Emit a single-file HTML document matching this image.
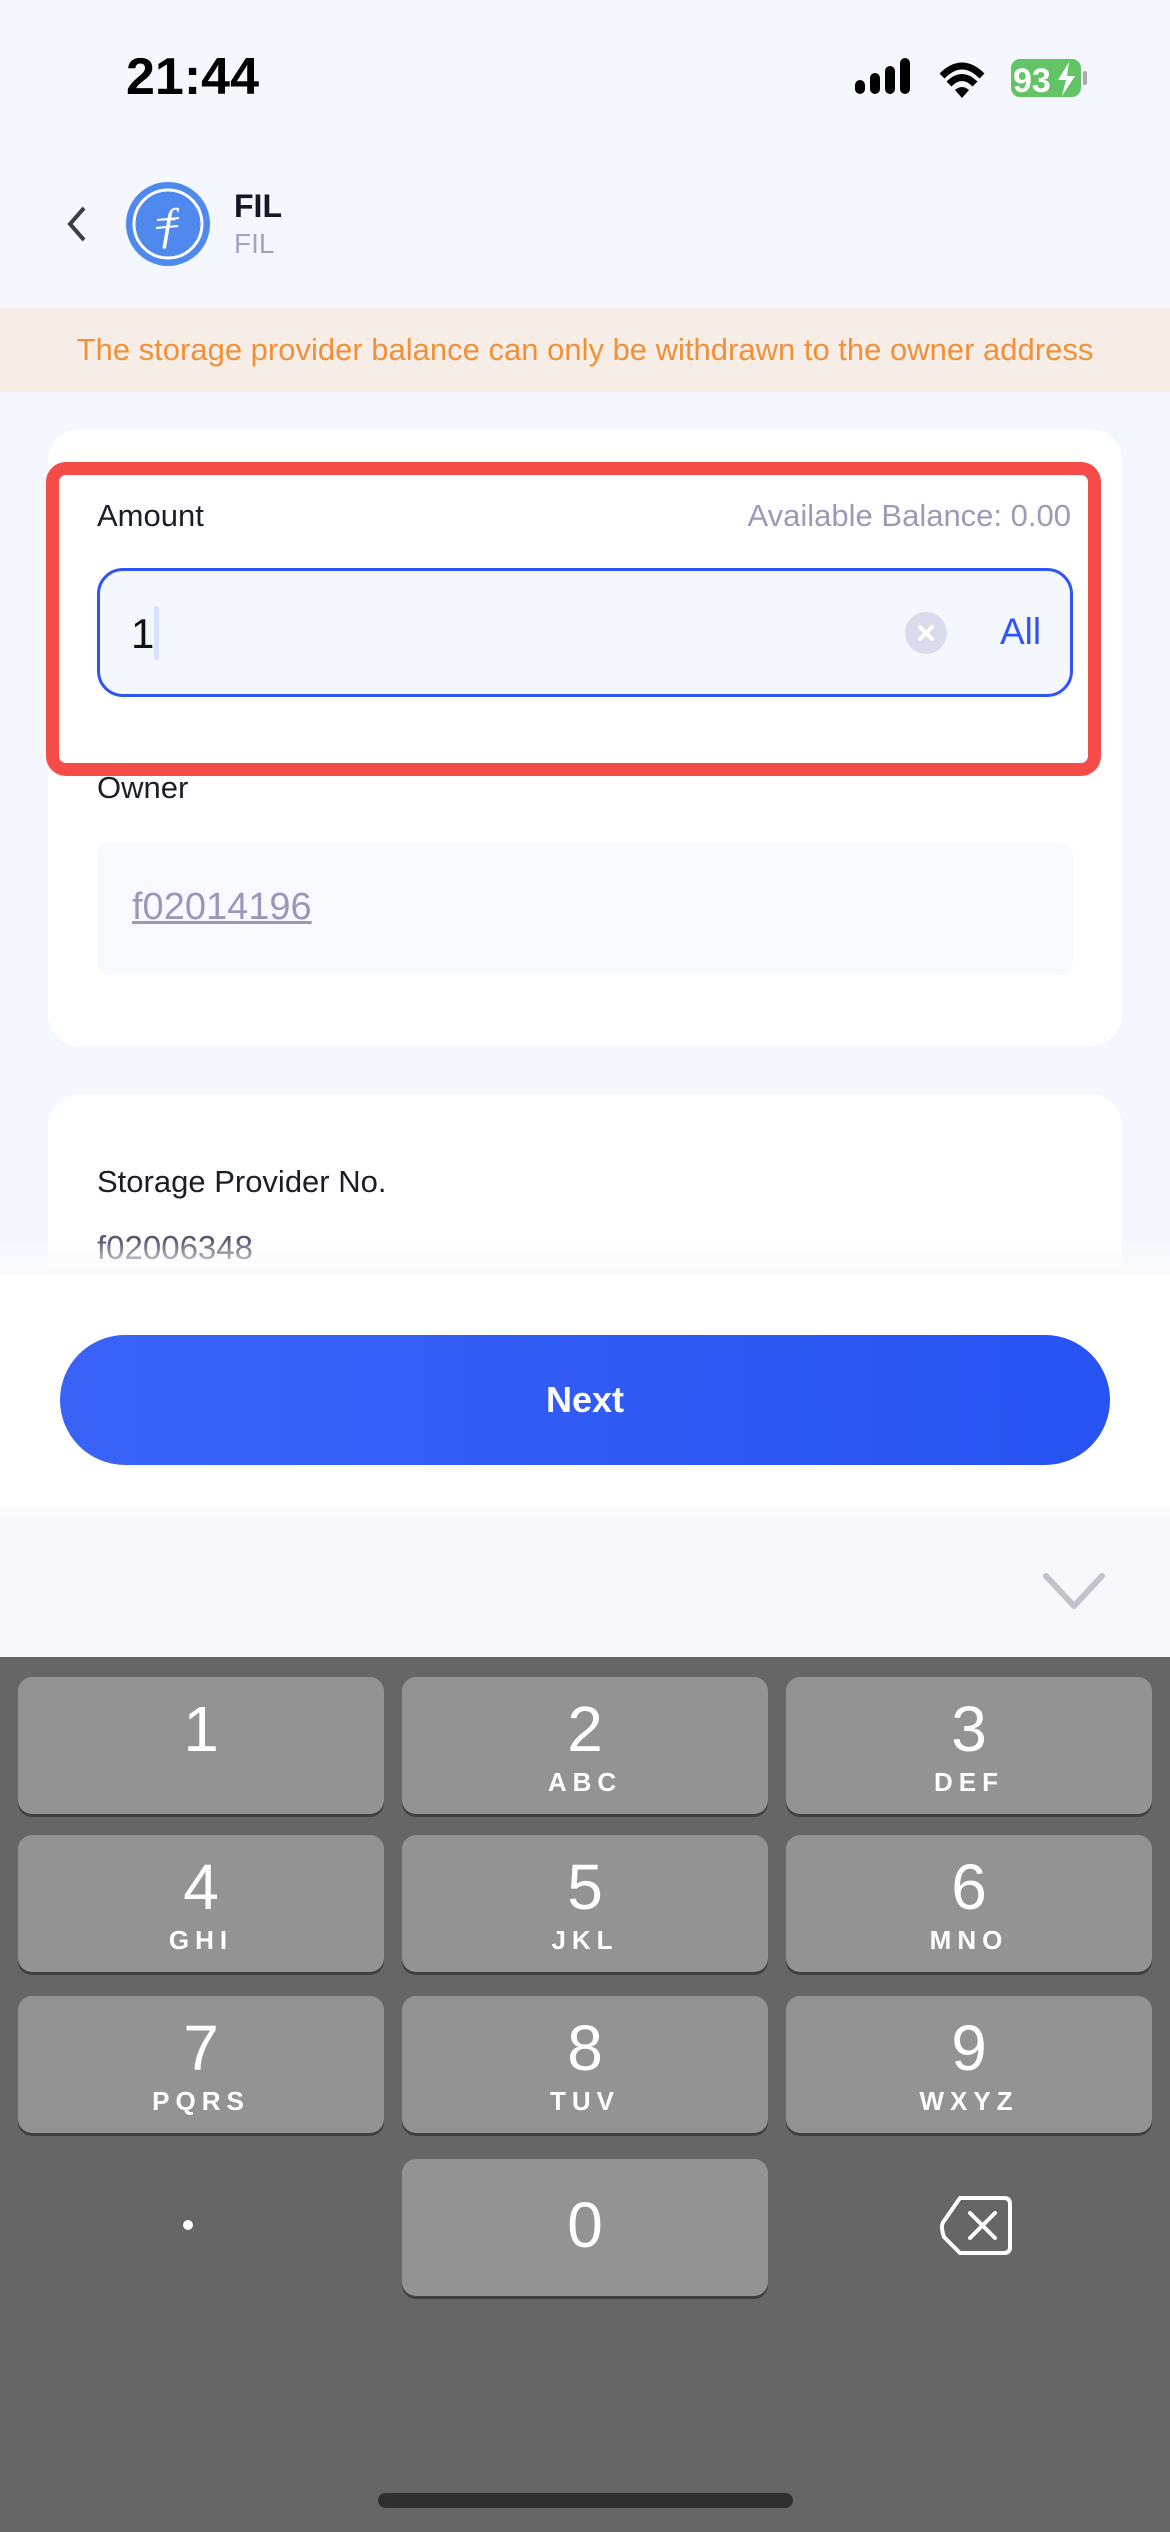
<!DOCTYPE html>
<html><head><meta charset="utf-8"><style>
*{margin:0;padding:0;box-sizing:border-box}
body{width:1170px;height:2532px;background:#f4f7fe;font-family:"Liberation Sans",sans-serif;position:relative;overflow:hidden}
.a{position:absolute}
.key{position:absolute;width:366px;height:137px;background:#939393;border-radius:14px;box-shadow:0 3px 0 #3f3f3f;color:#fff;text-align:center}
.key .d{font-size:64px;line-height:64px;margin-top:20px}
.key .l{font-size:26px;font-weight:bold;letter-spacing:6px;margin-top:6px}
</style></head><body>
<div class="a" style="left:126px;top:47px;font-size:52px;font-weight:bold;color:#000">21:44</div>
<svg class="a" style="left:855px;top:56px" width="240" height="44">
<rect x="0" y="24" width="10" height="14" rx="5"/><rect x="15" y="17" width="10" height="21" rx="5"/><rect x="30" y="10" width="10" height="28" rx="5"/><rect x="45" y="2" width="10" height="36" rx="5"/>
<g transform="translate(27,0)"><path d="M60 20 Q80 0 100 20" stroke="#000" stroke-width="7" fill="none"/><path d="M67 28 Q80 15 93 28" stroke="#000" stroke-width="7" fill="none"/><path d="M73 34 L80 42 L87 34 Q80 28 73 34Z"/></g>
<rect x="156" y="3" width="70" height="38" rx="9" fill="#63c466"/><rect x="228" y="15" width="4" height="14" rx="2" fill="#aaa"/>
<text x="158" y="36" font-family="Liberation Sans" font-weight="bold" font-size="34" fill="#fff">93</text><path d="M214 6 L203 24 L211 24 L207 40 L220 20 L212 20Z" fill="#fff"/>
</svg>
<svg class="a" style="left:62px;top:204px" width="30" height="40"><path d="M22 4 L8 20 L22 36" stroke="#3b3e4a" stroke-width="4" fill="none"/></svg>
<svg class="a" style="left:126px;top:182px" width="84" height="84"><circle cx="42" cy="42" r="42" fill="#5089ee"/><circle cx="42" cy="42" r="34" fill="none" stroke="#fff" stroke-width="3"/><text x="42" y="57" text-anchor="middle" font-family="Liberation Serif" font-style="italic" font-size="44" fill="#fff">f</text><path d="M31 38 L53 36 M30 46 L52 44" stroke="#fff" stroke-width="2"/></svg>
<div class="a" style="left:234px;top:188px;font-size:32px;font-weight:bold;color:#151728">FIL</div>
<div class="a" style="left:234px;top:228px;font-size:28px;color:#a5a4c0">FIL</div>
<div class="a" style="left:0;top:308px;width:1170px;height:84px;background:#f6ede6;color:#f0913a;font-size:31px;text-align:center;line-height:84px">The storage provider balance can only be withdrawn to the owner address</div>
<div class="a" style="left:48px;top:429px;width:1074px;height:617px;background:#fff;border-radius:32px"></div>
<div class="a" style="left:46px;top:462px;width:1055px;height:314px;border:13px solid #f54b49;border-radius:20px"></div>
<div class="a" style="left:97px;top:498px;font-size:31px;color:#1c1d2b">Amount</div>
<div class="a" style="right:99px;top:498px;font-size:31px;color:#9c9ab8">Available Balance: 0.00</div>
<div class="a" style="left:97px;top:568px;width:976px;height:129px;border:3px solid #2f55f5;border-radius:26px;background:#f4f7fe"></div>
<div class="a" style="left:131px;top:610px;font-size:42px;color:#111">1</div>
<div class="a" style="left:154px;top:606px;width:5px;height:54px;background:#d9e2fb;border-radius:3px"></div>
<svg class="a" style="left:905px;top:612px" width="42" height="42"><circle cx="21" cy="21" r="21" fill="#d8dbec"/><path d="M15 15 L27 27 M27 15 L15 27" stroke="#fff" stroke-width="4" stroke-linecap="round"/></svg>
<div class="a" style="left:1000px;top:611px;font-size:37px;color:#2f55f5">All</div>
<div class="a" style="left:97px;top:770px;font-size:31px;color:#1c1d2b">Owner</div>
<div class="a" style="left:97px;top:842px;width:976px;height:133px;background:#f8f9fe;border-radius:14px"></div>
<div class="a" style="left:132px;top:886px;font-size:38px;color:#9a98b8;text-decoration:underline">f02014196</div>
<div class="a" style="left:48px;top:1094px;width:1074px;height:300px;background:#fff;border-radius:32px"></div>
<div class="a" style="left:97px;top:1164px;font-size:31px;color:#1c1d2b">Storage Provider No.</div>
<div class="a" style="left:97px;top:1229px;font-size:33px;color:#5a5670">f02006348</div>
<div class="a" style="left:0;top:1240px;width:1170px;height:33px;background:linear-gradient(rgba(255,255,255,0),#fafafb)"></div>
<div class="a" style="left:0;top:1273px;width:1170px;height:244px;background:#fff"></div>
<div class="a" style="left:60px;top:1335px;width:1050px;height:130px;border-radius:65px;background:linear-gradient(90deg,#3a63f6,#2753f3);color:#fff;font-size:36px;font-weight:bold;text-align:center;line-height:130px">Next</div>
<div class="a" style="left:0;top:1500px;width:1170px;height:157px;background:linear-gradient(#fff,#f7f7fc 20px)"></div>
<svg class="a" style="left:1040px;top:1570px" width="70" height="45"><path d="M6 6 L34 36 L62 6" stroke="#c0c3cb" stroke-width="6" fill="none" stroke-linecap="round" stroke-linejoin="round"/></svg>
<div class="a" style="left:0;top:1657px;width:1170px;height:875px;background:#666"></div>
<div class="key" style="left:18px;top:1677px"><div class="d">1</div></div>
<div class="key" style="left:402px;top:1677px"><div class="d">2</div><div class="l">ABC</div></div>
<div class="key" style="left:786px;top:1677px"><div class="d">3</div><div class="l">DEF</div></div>
<div class="key" style="left:18px;top:1835px"><div class="d">4</div><div class="l">GHI</div></div>
<div class="key" style="left:402px;top:1835px"><div class="d">5</div><div class="l">JKL</div></div>
<div class="key" style="left:786px;top:1835px"><div class="d">6</div><div class="l">MNO</div></div>
<div class="key" style="left:18px;top:1996px"><div class="d">7</div><div class="l">PQRS</div></div>
<div class="key" style="left:402px;top:1996px"><div class="d">8</div><div class="l">TUV</div></div>
<div class="key" style="left:786px;top:1996px"><div class="d">9</div><div class="l">WXYZ</div></div>
<div class="a" style="left:183px;top:2220px;width:10px;height:10px;border-radius:5px;background:#fff"></div>
<div class="key" style="left:402px;top:2159px"><div class="d" style="margin-top:34px">0</div></div>
<svg class="a" style="left:940px;top:2194px" width="75" height="64"><path d="M20 4 H64 Q70 4 70 10 V53 Q70 59 64 59 H20 L4 43 Q0 31 4 27 Z" stroke="#fff" stroke-width="4" fill="none" stroke-linejoin="round"/><path d="M30 19 L55 44 M55 19 L30 44" stroke="#fff" stroke-width="4" stroke-linecap="round"/></svg>
<div class="a" style="left:378px;top:2493px;width:415px;height:15px;border-radius:8px;background:#2f2f2f"></div>
</body></html>
